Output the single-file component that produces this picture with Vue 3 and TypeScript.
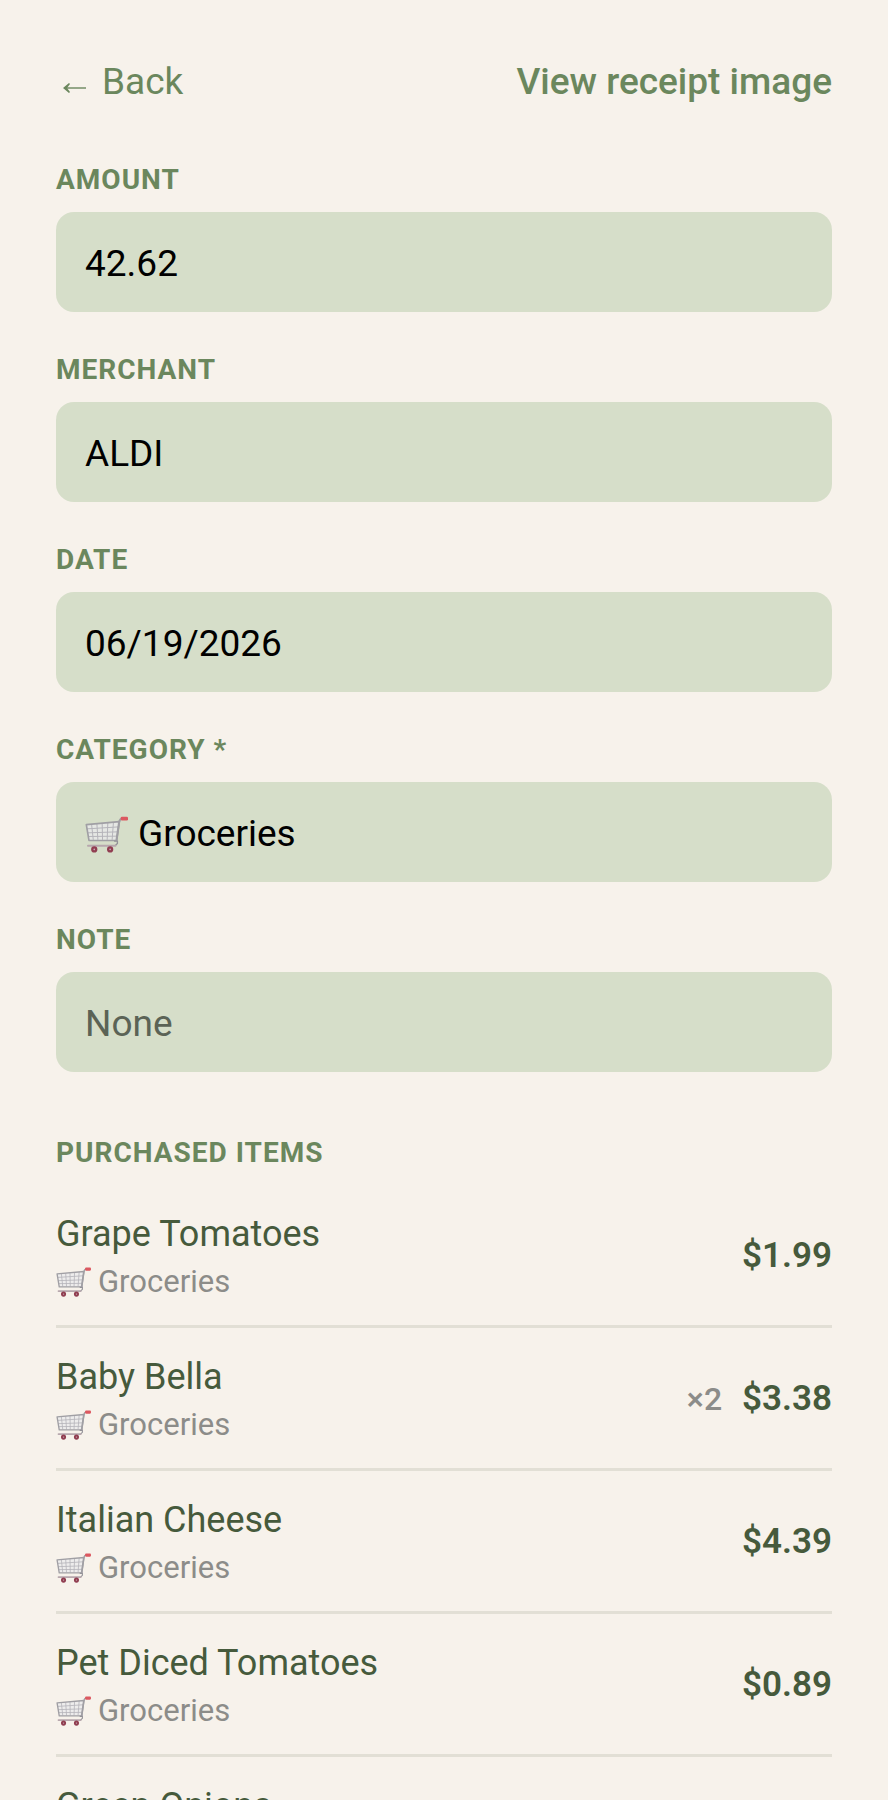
<script setup lang="ts">
import { ref } from 'vue'

interface Item {
  name: string
  category?: string
  quantity?: number
  price?: string
}

const amount = ref('42.62')
const merchant = ref('ALDI')
const date = ref('06/19/2026')
const category = ref('Groceries')
const note = ref('')

const items: Item[] = [
  { name: 'Grape Tomatoes', category: 'Groceries', price: '$1.99' },
  { name: 'Baby Bella', category: 'Groceries', quantity: 2, price: '$3.38' },
  { name: 'Italian Cheese', category: 'Groceries', price: '$4.39' },
  { name: 'Pet Diced Tomatoes', category: 'Groceries', price: '$0.89' },
  { name: 'Green Onions' },
]
</script>

<template>
  <main class="screen">
    <svg class="defs" aria-hidden="true">
      <symbol id="cart" viewBox="0 0 130 110">
        <path d="M4 25 L104 16 L97 72 L12 72 Z" fill="#e9e9ec" fill-opacity="0.75" />
        <path
          d="M5 38 L101 32 M8 50 L99 47 M10 61 L98 60 M20 25 L25 71 M36 23 L39 71 M52 22 L53 71 M69 20 L67 71 M86 18 L82 71"
          fill="none" stroke="#b4b3b9" stroke-width="3"
        />
        <path d="M4 25 L104 16 L96 73 L12 73 Z" fill="none" stroke="#a09fa4" stroke-width="5" stroke-linejoin="round" />
        <path d="M95 73 L103 18 Q105 8 114 6" fill="none" stroke="#a09fa4" stroke-width="6" />
        <path d="M88 75 L98 75 L98 82 L91 89" fill="none" stroke="#929197" stroke-width="4" />
        <path d="M9 89 H92" fill="none" stroke="#b7a7ad" stroke-width="6" stroke-linecap="round" />
        <rect x="108" y="1" width="22" height="12" rx="4" fill="#dc5860" />
        <circle cx="28" cy="100" r="6" fill="#c7adb6" stroke="#913e51" stroke-width="7" />
        <circle cx="76" cy="100" r="6" fill="#c7adb6" stroke="#913e51" stroke-width="7" />
      </symbol>
    </svg>

    <header class="header">
      <button type="button" class="back">
        <svg class="arrow" viewBox="0 0 24 12" aria-hidden="true">
          <path d="M2 6 H23" fill="none" stroke="currentColor" stroke-width="1.4" />
          <path d="M0 6 L6 1 L7 2 L4 6 L7 10 L6 11 Z" fill="currentColor" />
        </svg>
        <span>Back</span>
      </button>
      <button type="button" class="view">View receipt image</button>
    </header>

    <form class="form" @submit.prevent>
      <div class="field">
        <label for="amount">AMOUNT</label>
        <input id="amount" v-model="amount" type="text" inputmode="decimal" />
      </div>
      <div class="field">
        <label for="merchant">MERCHANT</label>
        <input id="merchant" v-model="merchant" type="text" />
      </div>
      <div class="field">
        <label for="date">DATE</label>
        <input id="date" v-model="date" type="text" />
      </div>
      <div class="field">
        <label for="category">CATEGORY *</label>
        <div class="picker">
          <svg class="picker-icon" aria-hidden="true"><use href="#cart" /></svg>
          <select id="category" v-model="category">
            <option>Groceries</option>
          </select>
        </div>
      </div>
      <div class="field">
        <label for="note">NOTE</label>
        <input id="note" v-model="note" type="text" placeholder="None" />
      </div>
    </form>

    <section class="purchases">
      <h2>PURCHASED ITEMS</h2>
      <ul>
        <li v-for="item in items" :key="item.name">
          <div class="info">
            <span class="name">{{ item.name }}</span>
            <span v-if="item.category" class="category">
              <svg class="cart" aria-hidden="true"><use href="#cart" /></svg>
              {{ item.category }}
            </span>
          </div>
          <span v-if="item.quantity" class="quantity">×{{ item.quantity }}</span>
          <span v-if="item.price" class="price">{{ item.price }}</span>
        </li>
      </ul>
    </section>
  </main>
</template>

<style>
body {
  margin: 0;
  background: #f7f2eb;
}
</style>

<style scoped>
.screen {
  box-sizing: border-box;
  height: 100vh;
  overflow-y: auto;
  scrollbar-width: none;
  padding: 61px 56px 0;
  background: #f7f2eb;
  color: #465a3c;
  font-family: Roboto, "Liberation Sans", sans-serif;
}

.defs {
  position: absolute;
  width: 0;
  height: 0;
}

.header {
  display: flex;
  justify-content: space-between;
  align-items: center;
  height: 42px;
  margin-bottom: 60px;
}

.header button {
  padding: 0;
  border: 0;
  background: none;
  color: #6b875d;
  font: 400 37px/42px Roboto, "Liberation Sans", sans-serif;
  cursor: pointer;
}

.header .back {
  display: flex;
  align-items: center;
  gap: 15px;
  padding-left: 7px;
}

.header .view {
  font-weight: 500;
}

.arrow {
  width: 24px;
  height: 12px;
  margin-top: 12px;
}

.form {
  display: flex;
  flex-direction: column;
  gap: 41px;
}

.field {
  display: flex;
  flex-direction: column;
  gap: 15px;
}

label,
h2 {
  margin: 0;
  color: #6b875d;
  font-size: 28px;
  font-weight: 700;
  line-height: 34px;
  letter-spacing: 1px;
}

input,
select {
  box-sizing: border-box;
  width: 100%;
  height: 100px;
  margin: 0;
  padding: 3px 29px 0;
  border: 0;
  border-radius: 18px;
  outline: none;
  appearance: none;
  background: #d6dec9;
  color: #000;
  font: 400 37px/44px Roboto, "Liberation Sans", sans-serif;
}

input::placeholder {
  color: #5b6356;
  opacity: 1;
}

.picker {
  position: relative;
}

.picker select {
  padding-left: 82px;
}

.picker-icon {
  position: absolute;
  left: 29px;
  top: 34px;
  width: 43px;
  height: 37px;
  pointer-events: none;
}

.purchases {
  margin-top: 64px;
}

ul {
  margin: 15px 0 0;
  padding: 0;
  list-style: none;
}

li {
  display: flex;
  align-items: center;
  box-sizing: border-box;
  padding: 25px 0 24px;
  border-bottom: 3px solid #e2dfd5;
}

.info {
  display: flex;
  flex: 1;
  flex-direction: column;
  gap: 5px;
}

.name {
  font-size: 36px;
  line-height: 48px;
}

.category {
  display: flex;
  align-items: center;
  gap: 7px;
  color: #8c8c89;
  font-size: 31px;
  line-height: 38px;
}

.cart {
  width: 35px;
  height: 30px;
}

.quantity {
  margin-right: 20px;
  color: #8c8c89;
  font-size: 32px;
  font-weight: 500;
}

.price {
  font-size: 35px;
  font-weight: 600;
}
</style>
